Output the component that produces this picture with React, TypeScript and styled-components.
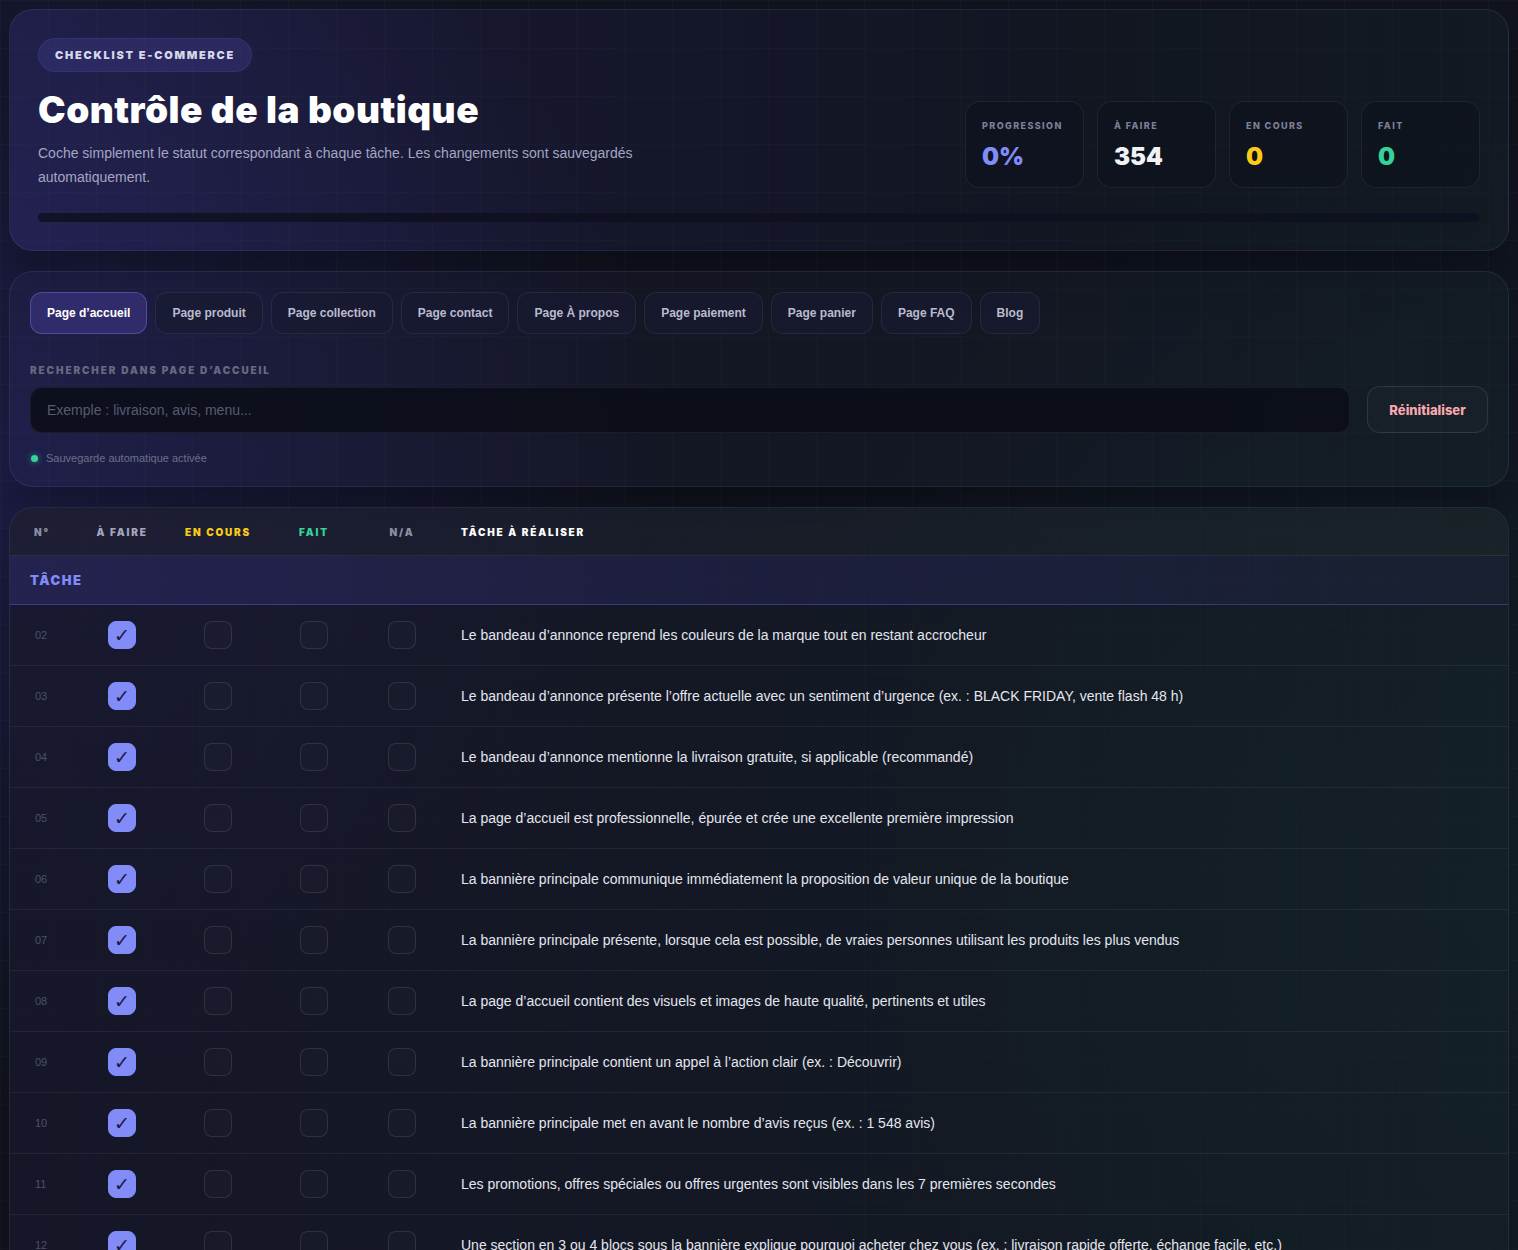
import styled, { createGlobalStyle } from "styled-components";

const GlobalStyle = createGlobalStyle`
  html, body {
    margin: 0;
    padding: 0;
    overflow: hidden;
  }
  body {
    font-family: "Liberation Sans", Arial, sans-serif;
    color: #e5e7eb;
    background-color: #11131e;
    background-image:
      linear-gradient(rgba(255, 255, 255, 0.018) 1px, transparent 1px),
      linear-gradient(90deg, rgba(255, 255, 255, 0.018) 1px, transparent 1px),
      radial-gradient(circle at 0% 35%, rgba(79, 70, 229, 0.2), transparent 38%),
      radial-gradient(circle at 100% 70%, rgba(45, 212, 191, 0.07), transparent 45%);
    background-size: 48px 48px, 48px 48px, 100% 100%, 100% 100%;
  }
  * { box-sizing: border-box; }
`;

const tabs = [
  "Page d’accueil",
  "Page produit",
  "Page collection",
  "Page contact",
  "Page À propos",
  "Page paiement",
  "Page panier",
  "Page FAQ",
  "Blog",
];

const tasks = [
  { n: "02", text: "Le bandeau d’annonce reprend les couleurs de la marque tout en restant accrocheur" },
  { n: "03", text: "Le bandeau d’annonce présente l’offre actuelle avec un sentiment d’urgence (ex. : BLACK FRIDAY, vente flash 48 h)" },
  { n: "04", text: "Le bandeau d’annonce mentionne la livraison gratuite, si applicable (recommandé)" },
  { n: "05", text: "La page d’accueil est professionnelle, épurée et crée une excellente première impression" },
  { n: "06", text: "La bannière principale communique immédiatement la proposition de valeur unique de la boutique" },
  { n: "07", text: "La bannière principale présente, lorsque cela est possible, de vraies personnes utilisant les produits les plus vendus" },
  { n: "08", text: "La page d’accueil contient des visuels et images de haute qualité, pertinents et utiles" },
  { n: "09", text: "La bannière principale contient un appel à l’action clair (ex. : Découvrir)" },
  { n: "10", text: "La bannière principale met en avant le nombre d’avis reçus (ex. : 1 548 avis)" },
  { n: "11", text: "Les promotions, offres spéciales ou offres urgentes sont visibles dans les 7 premières secondes" },
  { n: "12", text: "Une section en 3 ou 4 blocs sous la bannière explique pourquoi acheter chez vous (ex. : livraison rapide offerte, échange facile, etc.)" },
];

const stats = [
  { label: "Progression", value: "0%", color: "#818cf8" },
  { label: "À faire", value: "354", color: "#f1f2f6" },
  { label: "En cours", value: "0", color: "#facc15" },
  { label: "Fait", value: "0", color: "#34d399" },
];

const App = () => {
  return (
    <Page>
      <GlobalStyle />
      <HeaderCard>
        <HeaderTop>
          <Intro>
            <Badge>Checklist e-commerce</Badge>
            <Title>Contrôle de la boutique</Title>
            <Subtitle>
              Coche simplement le statut correspondant à chaque tâche. Les changements sont sauvegardés
              automatiquement.
            </Subtitle>
          </Intro>
          <Stats>
            {stats.map((s) => (
              <StatCard key={s.label}>
                <StatLabel>{s.label}</StatLabel>
                <StatValue $color={s.color}>{s.value}</StatValue>
              </StatCard>
            ))}
          </Stats>
        </HeaderTop>
        <ProgressTrack>
          <ProgressFill style={{ width: "0%" }} />
        </ProgressTrack>
      </HeaderCard>

      <ControlsCard>
        <Tabs>
          {tabs.map((t, i) => (
            <Tab key={t} $active={i === 0}>
              {t}
            </Tab>
          ))}
        </Tabs>
        <SearchLabel>Rechercher dans Page d’accueil</SearchLabel>
        <SearchRow>
          <SearchInput placeholder="Exemple : livraison, avis, menu..." />
          <ResetButton>Réinitialiser</ResetButton>
        </SearchRow>
        <Status>
          <Dot />
          Sauvegarde automatique activée
        </Status>
      </ControlsCard>

      <TableCard>
        <HeadRow>
          <HeadCell $color="#8b8fa5" $align="left">N°</HeadCell>
          <HeadCell $color="#a5a8bb">À faire</HeadCell>
          <HeadCell $color="#facc15">En cours</HeadCell>
          <HeadCell $color="#34d399">Fait</HeadCell>
          <HeadCell $color="#8b8fa5">N/A</HeadCell>
          <HeadCell $color="#ffffff" $align="left" $pad>
            Tâche à réaliser
          </HeadCell>
        </HeadRow>
        <SectionRow>Tâche</SectionRow>
        {tasks.map((t) => (
          <TaskRow key={t.n}>
            <Num>{t.n}</Num>
            <BoxCell>
              <Check $checked>✓</Check>
            </BoxCell>
            <BoxCell>
              <Check />
            </BoxCell>
            <BoxCell>
              <Check />
            </BoxCell>
            <BoxCell>
              <Check />
            </BoxCell>
            <TaskText>{t.text}</TaskText>
          </TaskRow>
        ))}
      </TableCard>
    </Page>
  );
};

export default App;

const Page = styled.div`
  padding: 9px;
  display: flex;
  flex-direction: column;
  gap: 20px;
`;

const Card = styled.section`
  border-radius: 24px;
  border: 1px solid rgba(148, 163, 230, 0.12);
  box-shadow: 0 20px 40px rgba(0, 0, 0, 0.25);
`;

const HeaderCard = styled(Card)`
  padding: 28px 28px 28px;
  background: linear-gradient(90deg, rgba(58, 52, 140, 0.3) 0%, rgba(40, 38, 96, 0.22) 35%, rgba(20, 30, 40, 0.35) 75%, rgba(22, 34, 38, 0.45) 100%);
`;

const HeaderTop = styled.div`
  display: flex;
  justify-content: space-between;
  align-items: flex-end;
`;

const Intro = styled.div`
  display: flex;
  flex-direction: column;
  align-items: flex-start;
`;

const Badge = styled.div`
  height: 34px;
  padding: 0 16px;
  display: flex;
  align-items: center;
  border-radius: 17px;
  background: rgba(70, 64, 150, 0.35);
  border: 1px solid rgba(129, 140, 248, 0.1);
  font-family: Inter, "DejaVu Sans", sans-serif;
  font-weight: 900;
  font-size: 11px;
  letter-spacing: 1.75px;
  text-transform: uppercase;
  color: #d6d7ea;
`;

const Title = styled.h1`
  margin: 16px 0 0;
  font-family: Inter, "DejaVu Sans", sans-serif;
  font-weight: 900;
  font-size: 37px;
  line-height: 44px;
  letter-spacing: 0.5px;
  color: #ffffff;
`;

const Subtitle = styled.p`
  margin: 9px 0 0;
  max-width: 610px;
  font-size: 14px;
  line-height: 24px;
  color: #a3a6c2;
`;

const Stats = styled.div`
  display: grid;
  grid-template-columns: repeat(4, 119px);
  gap: 13px;
  margin-bottom: 1px;
`;

const StatCard = styled.div`
  height: 87px;
  padding: 18px 16px 0;
  border-radius: 15px;
  background: rgba(12, 15, 26, 0.45);
  border: 1px solid rgba(255, 255, 255, 0.07);
`;

const StatLabel = styled.div`
  font-family: Inter, "DejaVu Sans", sans-serif;
  font-weight: 800;
  font-size: 9px;
  letter-spacing: 1.4px;
  text-transform: uppercase;
  color: #7d8096;
`;

const StatValue = styled.div<{ $color: string }>`
  margin-top: 12px;
  font-family: Inter, "DejaVu Sans", sans-serif;
  font-weight: 900;
  font-size: 24px;
  line-height: 28px;
  color: ${(p) => p.$color};
`;

const ProgressTrack = styled.div`
  margin-top: 24px;
  height: 9px;
  border-radius: 5px;
  background: rgba(14, 16, 32, 0.85);
  overflow: hidden;
`;

const ProgressFill = styled.div`
  height: 100%;
  background: linear-gradient(90deg, #818cf8, #34d399);
`;

const ControlsCard = styled(Card)`
  padding: 20px 20px 21px;
  background: linear-gradient(90deg, rgba(40, 38, 90, 0.28) 0%, rgba(28, 32, 52, 0.3) 45%, rgba(22, 36, 40, 0.4) 100%);
`;

const Tabs = styled.div`
  display: flex;
  gap: 8px;
`;

const Tab = styled.button<{ $active?: boolean }>`
  height: 42px;
  padding: 0 16px;
  border-radius: 12px;
  font-family: "Liberation Sans", Arial, sans-serif;
  font-weight: 700;
  font-size: 12px;
  color: ${(p) => (p.$active ? "#ffffff" : "#b9bbcf")};
  background: ${(p) => (p.$active ? "#302c6b" : "rgba(24, 26, 48, 0.7)")};
  border: 1px solid ${(p) => (p.$active ? "rgba(129, 140, 248, 0.35)" : "rgba(255, 255, 255, 0.07)")};
`;

const SearchLabel = styled.div`
  margin-top: 30px;
  font-family: Inter, "DejaVu Sans", sans-serif;
  font-weight: 900;
  font-size: 10px;
  line-height: 12px;
  letter-spacing: 1.9px;
  text-transform: uppercase;
  color: #666a80;
`;

const SearchRow = styled.div`
  margin-top: 10px;
  display: flex;
  gap: 17px;
  align-items: center;
`;

const SearchInput = styled.input`
  flex: 1;
  height: 46px;
  padding: 0 16px;
  border-radius: 12px;
  background: rgba(10, 13, 24, 0.85);
  border: 1px solid rgba(255, 255, 255, 0.06);
  font-family: "Liberation Sans", Arial, sans-serif;
  font-size: 14px;
  color: #e5e7eb;
  outline: none;
  &::placeholder {
    color: #575b70;
  }
`;

const ResetButton = styled.button`
  width: 121px;
  height: 47px;
  border-radius: 13px;
  background: rgba(255, 255, 255, 0.02);
  border: 1px solid rgba(255, 255, 255, 0.1);
  font-family: Inter, "Liberation Sans", sans-serif;
  font-weight: 800;
  font-size: 13px;
  color: #f9a8b0;
`;

const Status = styled.div`
  margin-top: 18px;
  display: flex;
  align-items: center;
  gap: 8px;
  padding-left: 1px;
  font-size: 11px;
  line-height: 14px;
  color: #6c7088;
`;

const Dot = styled.span`
  width: 7px;
  height: 7px;
  border-radius: 50%;
  background: #34d399;
  box-shadow: 0 0 6px rgba(52, 211, 153, 0.6);
`;

const TableCard = styled(Card)`
  overflow: hidden;
  background: linear-gradient(90deg, rgba(24, 24, 44, 0.75) 0%, rgba(22, 28, 40, 0.6) 50%, rgba(20, 34, 36, 0.55) 100%);
`;

const columns = "40px 96px 96px 96px 80px 1fr";

const HeadRow = styled.div`
  display: grid;
  grid-template-columns: ${columns};
  align-items: center;
  height: 48px;
  padding-left: 24px;
  background: rgba(255, 255, 255, 0.025);
  border-bottom: 1px solid rgba(255, 255, 255, 0.07);
`;

const HeadCell = styled.div<{ $color: string; $align?: string; $pad?: boolean }>`
  text-align: ${(p) => p.$align || "center"};
  padding-left: ${(p) => (p.$pad ? "19px" : "0")};
  font-family: Inter, "DejaVu Sans", sans-serif;
  font-weight: 900;
  font-size: 10px;
  letter-spacing: 1.8px;
  text-transform: uppercase;
  color: ${(p) => p.$color};
`;

const SectionRow = styled.div`
  height: 49px;
  display: flex;
  align-items: center;
  padding-left: 20px;
  background: linear-gradient(90deg, rgba(60, 54, 140, 0.33), rgba(50, 45, 120, 0.26) 70%, rgba(40, 40, 90, 0.2));
  border-bottom: 1px solid rgba(99, 102, 241, 0.38);
  font-family: Inter, "DejaVu Sans", sans-serif;
  font-weight: 900;
  font-size: 13px;
  letter-spacing: 1.5px;
  text-transform: uppercase;
  color: #818cf8;
`;

const TaskRow = styled.div`
  display: grid;
  grid-template-columns: ${columns};
  align-items: center;
  height: 61px;
  padding-left: 24px;
  border-bottom: 1px solid rgba(255, 255, 255, 0.06);
`;

const Num = styled.div`
  font-size: 11px;
  color: #4d5166;
  padding-left: 1px;
`;

const BoxCell = styled.div`
  display: flex;
  justify-content: center;
`;

const Check = styled.div<{ $checked?: boolean }>`
  width: 28px;
  height: 28px;
  border-radius: 8px;
  display: flex;
  align-items: center;
  justify-content: center;
  font-family: "DejaVu Sans", sans-serif;
  font-size: 19px;
  color: #1c1a3a;
  background: ${(p) => (p.$checked ? "#818cf8" : "rgba(255, 255, 255, 0.015)")};
  border: 1px solid ${(p) => (p.$checked ? "#818cf8" : "rgba(255, 255, 255, 0.1)")};
`;

const TaskText = styled.div`
  padding-left: 19px;
  font-size: 14px;
  color: #e4e6ef;
  white-space: nowrap;
`;
